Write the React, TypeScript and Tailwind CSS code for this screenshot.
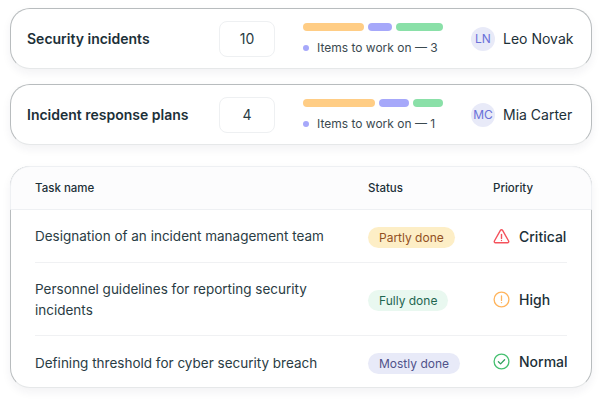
const font = { fontFamily: 'Inter, "Liberation Sans", sans-serif' };

function SummaryCard({ title, count, bars, left, initials, name }: {
  title: string;
  count: number;
  bars: number[];
  left: number;
  initials: string;
  name: string;
}) {
  const colors = ['bg-[#ffcd85]', 'bg-[#a6a8fa]', 'bg-[#8ae0a8]'];
  return (
    <div className="flex h-[61px] items-center rounded-[20px] border border-[#b8bcbe] border-b-[#e6e8e9] bg-white pl-[16px] shadow-[0_4px_10px_rgba(30,40,60,0.06)]">
      <div className="w-[192px] shrink-0 text-[14px] font-semibold text-[#1c3038]">{title}</div>
      <div className="flex h-[36px] w-[56px] shrink-0 items-center justify-center rounded-[8px] border border-[#eef0f2] text-[14px] text-[#2a3c44]">
        {count}
      </div>
      <div className="ml-[28px] w-[140px] shrink-0 pt-[3px]">
        <div className="flex gap-[4px]">
          {bars.map((w, i) => (
            <div key={i} className={`h-[8px] rounded-full ${colors[i]}`} style={{ width: w }} />
          ))}
        </div>
        <div className="mt-[8px] flex items-center text-[12px] text-[#3b4a50]">
          <span className="mr-[8px] h-[6px] w-[6px] rounded-full bg-[#a6a8fa]" />
          Items to work on — {left}
        </div>
      </div>
      <div className="ml-[28px] flex items-center gap-[8px]">
        <div className="flex h-[24px] w-[24px] items-center justify-center rounded-full bg-[#e8eaf8] text-[12px] text-[#6a70d8]">
          {initials}
        </div>
        <span className="text-[14px] text-[#1c3038]">{name}</span>
      </div>
    </div>
  );
}

function Priority({ level }: { level: 'Critical' | 'High' | 'Normal' }) {
  return (
    <div className="flex items-center gap-[9px] text-[14px] font-[450] text-[#1c3038]">
      {level === 'Critical' && (
        <svg width="17" height="17" viewBox="0 0 17 17" fill="none" stroke="#f4525c" strokeWidth="1.4" strokeLinejoin="round" strokeLinecap="round">
          <path d="M7.4 2.4a1.3 1.3 0 0 1 2.2 0l6 10.6a1.2 1.2 0 0 1-1.1 1.8H2.5a1.2 1.2 0 0 1-1.1-1.8z" />
          <path d="M8.5 6.4v4" />
          <path d="M8.5 12.4v.1" />
        </svg>
      )}
      {level === 'High' && (
        <svg width="17" height="17" viewBox="0 0 17 17" fill="none" stroke="#ffb45c" strokeWidth="1.3" strokeLinecap="round">
          <circle cx="8.5" cy="8.5" r="7.4" />
          <path d="M8.5 5v4.4" />
          <path d="M8.5 11.6v.1" />
        </svg>
      )}
      {level === 'Normal' && (
        <svg width="17" height="17" viewBox="0 0 17 17" fill="none" stroke="#45c070" strokeWidth="1.3" strokeLinecap="round" strokeLinejoin="round">
          <circle cx="8.5" cy="8.5" r="7.4" />
          <path d="M5.4 8.8l2.2 2.1 4-4.2" stroke="#2f9e5c" />
        </svg>
      )}
      {level}
    </div>
  );
}

const rows = [
  { name: 'Designation of an incident management team', status: 'Partly done', badge: 'bg-[#fdeec6] text-[#92501f]', level: 'Critical' as const, height: 'h-[52px]', nudge: '' },
  { name: 'Personnel guidelines for reporting security incidents', status: 'Fully done', badge: 'bg-[#e9f8f0] text-[#1f6650]', level: 'High' as const, height: 'h-[73px]', nudge: 'pt-[2px]' },
  { name: 'Defining threshold for cyber security breach', status: 'Mostly done', badge: 'bg-[#e8eaf8] text-[#50528a]', level: 'Normal' as const, height: 'h-[52px]', nudge: 'pt-[4px]' },
];

export default function App() {
  return (
    <div className="h-[402px] w-[602px] overflow-hidden bg-white px-[10px] pt-[8px]" style={font}>
      <div className="flex flex-col gap-[15px]">
        <SummaryCard title="Security incidents" count={10} bars={[61, 24, 47]} left={3} initials="LN" name="Leo Novak" />
        <SummaryCard title="Incident response plans" count={4} bars={[72, 30, 30]} left={1} initials="MC" name="Mia Carter" />
      </div>

      <div className="mt-[21px] rounded-[20px] border border-[#b8bcbe] border-b-[#e6e8e9] bg-white shadow-[0_4px_10px_rgba(30,40,60,0.06)]">
        <div className="-mx-px -mt-px flex h-[44px] items-center rounded-t-[20px] border border-[#eef0f3] bg-[#fcfcfd] pl-[24px] pt-[2px] text-[11.5px] font-medium text-[#1c3038]">
          <div className="w-[333px] shrink-0">Task name</div>
          <div className="w-[125px] shrink-0">Status</div>
          <div>Priority</div>
        </div>
        <div className="px-[24px]">
          {rows.map((row, i) => (
            <div key={row.name} className={`flex items-center ${row.height} ${i > 0 ? 'border-t border-[#f0f1f3]' : ''}`}>
              <div className={`w-[333px] shrink-0 pr-[20px] text-[13.5px] leading-[21px] text-[#2a3c44] ${row.nudge}`}>{row.name}</div>
              <div className="w-[125px] shrink-0">
                <span className={`inline-block whitespace-nowrap rounded-full px-[11px] py-[2px] text-[12px] leading-[17px] ${row.badge}`}>
                  {row.status}
                </span>
              </div>
              <Priority level={row.level} />
            </div>
          ))}
        </div>
      </div>
    </div>
  );
}
